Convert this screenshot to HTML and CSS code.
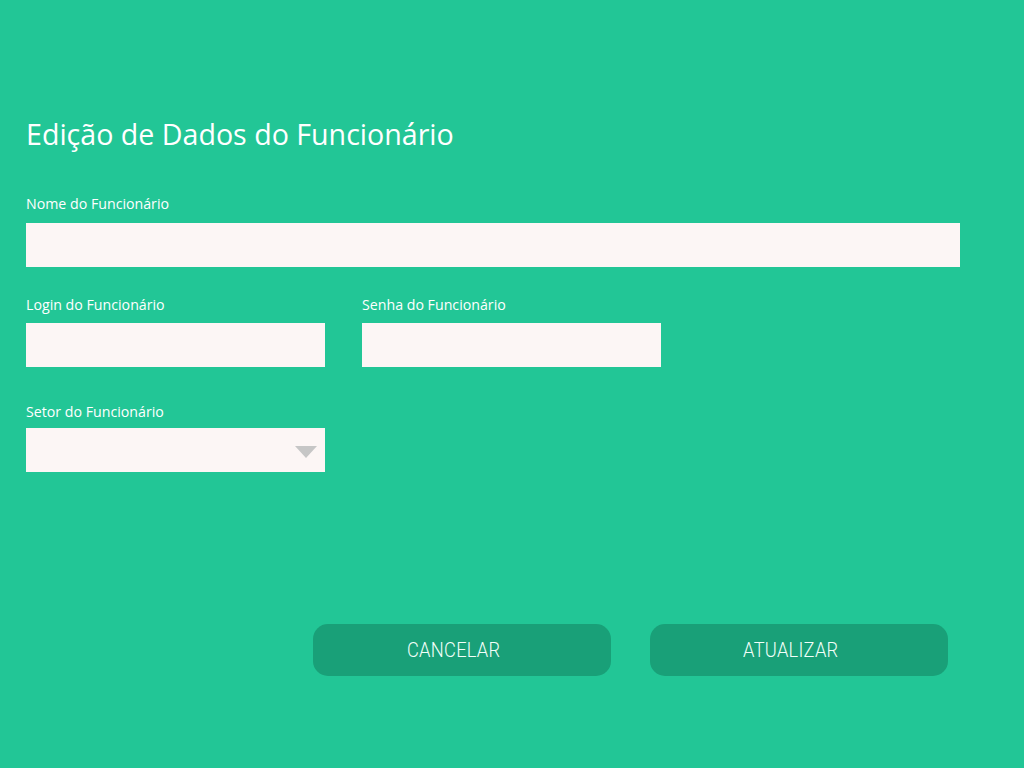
FILE: index.html
```html
<!DOCTYPE html>
<html lang="pt-BR">
<head>
<meta charset="utf-8">
<title>Edição de Dados do Funcionário</title>
<link rel="stylesheet" href="styles.css">
</head>
<body>
<main class="form">
  <h1 class="title">Edição de Dados do Funcionário</h1>

  <div class="field field-name">
    <label class="label" for="nome">Nome do Funcionário</label>
    <input class="input input-wide" id="nome" type="text">
  </div>

  <div class="row row-login">
    <div class="field field-login">
      <label class="label" for="login">Login do Funcionário</label>
      <input class="input" id="login" type="text">
    </div>
    <div class="field field-login">
      <label class="label" for="senha">Senha do Funcionário</label>
      <input class="input" id="senha" type="password">
    </div>
  </div>

  <div class="field field-setor">
    <label class="label" for="setor">Setor do Funcionário</label>
    <div class="select-wrap">
      <select class="input select" id="setor"></select>
    </div>
  </div>

  <div class="actions">
    <button class="btn" type="button"><span class="btn-text">CANCELAR</span></button>
    <button class="btn" type="button"><span class="btn-text">ATUALIZAR</span></button>
  </div>
</main>
</body>
</html>
```

FILE: styles.css
```css
html, body {
  margin: 0;
  padding: 0;
  background: #22c696;
  height: 100%;
}

body {
  font-family: "Open Sans", "Noto Sans", sans-serif;
  color: #ffffff;
}

.form {
  width: 934px;
  padding: 0 0 0 26px;
}

.title {
  margin: 114px 0 0;
  font-size: 28.6px;
  line-height: 40px;
  font-weight: 400;
}

.field {
  display: flex;
  flex-direction: column;
  gap: 9px;
}

.field-name {
  margin-top: 40px;
}

.field-login {
  gap: 8px;
}

.label {
  font-size: 14.2px;
  line-height: 20px;
  font-weight: 400;
}

.input {
  box-sizing: border-box;
  width: 299px;
  height: 44px;
  border: none;
  margin: 0;
  padding: 0 10px;
  background: #fcf6f5;
  font-family: inherit;
  font-size: 15px;
  outline: none;
}

.input-wide {
  width: 934px;
}

.row {
  display: flex;
  gap: 37px;
}

.row-login {
  margin-top: 28px;
}

.field-setor {
  margin-top: 35px;
  gap: 6px;
}

.select-wrap {
  position: relative;
  width: 299px;
}

.select {
  appearance: none;
  -webkit-appearance: none;
  border-radius: 0;
  display: block;
}

.select-wrap::after {
  content: "";
  position: absolute;
  right: 8px;
  top: 18px;
  width: 0;
  height: 0;
  border-left: 11px solid transparent;
  border-right: 11px solid transparent;
  border-top: 12px solid #c6c6c6;
  pointer-events: none;
}

.actions {
  display: flex;
  justify-content: flex-end;
  gap: 39px;
  padding-right: 12px;
  margin-top: 152px;
}

.btn {
  width: 298px;
  height: 52px;
  border: none;
  border-radius: 15px;
  padding: 0 16px 0 0;
  background: #19a078;
  color: #f2fff9;
  font-family: "Roboto", sans-serif;
  font-weight: 300;
  font-size: 21px;
  cursor: pointer;
}

.btn-text {
  display: inline-block;
  transform: scaleX(0.87);
  letter-spacing: 0.3px;
}
```
